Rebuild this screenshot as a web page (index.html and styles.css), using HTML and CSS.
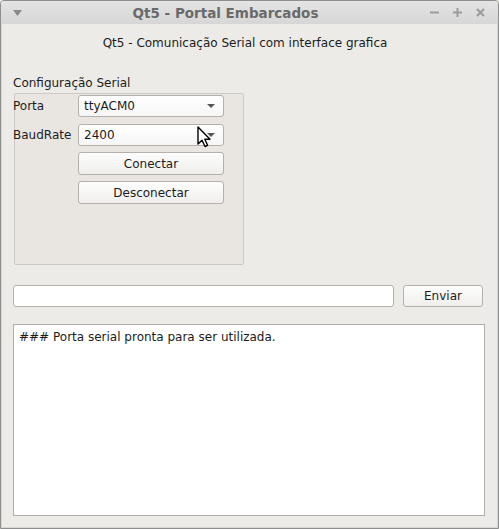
FILE: index.html
```html
<!DOCTYPE html>
<html>
<head>
<meta charset="utf-8">
<title>Qt5 - Portal Embarcados</title>
<link rel="stylesheet" href="styles.css">
</head>
<body>
<div class="window">
  <div class="titlebar">
    <div class="tb-left">
      <svg width="9" height="6" viewBox="0 0 9 6"><polygon points="0,0 9,0 4.5,6" fill="#8a8a8a"/></svg>
    </div>
    <div class="tb-title">Qt5 - Portal Embarcados</div>
    <div class="tb-right">
      <svg width="9" height="9" viewBox="0 0 9 9"><rect x="0" y="3.5" width="9" height="2" fill="#9c9c9c"/></svg>
      <svg width="9" height="9" viewBox="0 0 9 9"><rect x="0" y="3.5" width="9" height="2" fill="#9c9c9c"/><rect x="3.5" y="0" width="2" height="9" fill="#9c9c9c"/></svg>
      <svg width="9" height="9" viewBox="0 0 9 9"><path d="M1,1 L8,8 M8,1 L1,8" stroke="#9c9c9c" stroke-width="2.2"/></svg>
    </div>
  </div>

  <div class="content">
    <div class="heading">Qt5 - Comunicação Serial com interface grafica</div>

    <div class="group-title">Configuração Serial</div>
    <div class="group">
      <div class="form">
        <span class="label">Porta</span>
        <div class="combo"><span>ttyACM0</span><i class="caret"></i></div>
        <span class="label">BaudRate</span>
        <div class="combo"><span>2400</span><i class="caret"></i></div>
        <div class="button span2">Conectar</div>
        <div class="button span2">Desconectar</div>
      </div>
    </div>

    <div class="send-row">
      <div class="line-edit"></div>
      <div class="button send">Enviar</div>
    </div>

    <div class="log">### Porta serial pronta para ser utilizada.</div>
  </div>

  <!-- mouse pointer sitting over the baud rate combo -->
  <svg class="pointer" width="15" height="22" viewBox="0 0 15 22">
    <polygon points="1,1 1,18 5,14.2 8,20.5 10.6,19.3 7.8,13.2 13,13.2" fill="#fff" stroke="#000" stroke-width="1.4" stroke-linejoin="round"/>
  </svg>
</div>
</body>
</html>
```

FILE: styles.css
```css
html, body
{
margin: 0;
padding: 0;
background: #edebe7;
}

body
{
font-family: "DejaVu Sans", sans-serif;
font-size: 12px;
color: #1c1c1c;
}

.window
{
position: relative;
width: 499px;
height: 529px;
box-sizing: border-box;
border: 1px solid #8e8e8e;
border-radius: 4px 4px 0 0;
background: #edebe7;
display: flex;
flex-direction: column;
overflow: hidden;
}

/* title bar */
.titlebar
{
height: 23px;
flex: none;
display: flex;
align-items: center;
background: linear-gradient(#e4e4e4, #d6d6d6);
}

.tb-left
{
width: 28px;
box-sizing: border-box;
padding-left: 12px;
display: flex;
align-items: center;
}

.tb-title
{
flex: 1;
text-align: center;
font-weight: bold;
font-size: 13.5px;
color: #6a6a6a;
}

.tb-right
{
width: 76px;
box-sizing: border-box;
padding-left: 8px;
display: flex;
gap: 14px;
align-items: center;
}

/* client area */
.content
{
flex: 1;
border-left: 1px solid #d9d7d3;
border-right: 1px solid #d9d7d3;
border-bottom: 1px solid #d9d7d3;
padding: 0 12px 0 11px;
display: flex;
flex-direction: column;
}

.heading
{
margin-top: 11px;
padding-right: 8px;
line-height: 16px;
text-align: center;
}

.group-title
{
margin-top: 24px;
line-height: 16px;
}

.group
{
margin: 2px 0 0 1px;
width: 230px;
height: 172px;
box-sizing: border-box;
border: 1px solid #cdcac6;
border-radius: 2px;
background: #e9e6e2;
}

.form
{
margin: 1px 0 0 -2px;
display: grid;
grid-template-columns: 65px 146px;
grid-template-rows: 23px 22px 23px 23px;
row-gap: 6px;
align-items: start;
}

.label
{
height: 22px;
display: flex;
align-items: center;
}

.span2
{
grid-column: 2;
}

.combo, .button, .line-edit
{
box-sizing: border-box;
border: 1px solid #b4b1ad;
border-radius: 3px;
}

.combo
{
height: 22px;
background: linear-gradient(#ffffff, #f6f6f6);
display: flex;
align-items: center;
justify-content: space-between;
padding: 0 8px 0 5px;
}

.caret
{
width: 0;
height: 0;
border-left: 4px solid transparent;
border-right: 4px solid transparent;
border-top: 4px solid #555;
}

.button
{
height: 23px;
background: linear-gradient(#fdfdfd, #efeeec);
display: flex;
align-items: center;
justify-content: center;
}

.send-row
{
margin: 20px 2px 0 0;
display: flex;
gap: 9px;
}

.line-edit
{
flex: 1;
height: 22px;
background: #fff;
}

.send
{
width: 80px;
height: 22px;
}

.log
{
margin-top: 17px;
height: 192px;
box-sizing: border-box;
border: 1px solid #b0ada9;
background: #fff;
padding: 4px 5px;
line-height: 16px;
}

.pointer
{
position: absolute;
left: 196px;
top: 125px;
}
```
